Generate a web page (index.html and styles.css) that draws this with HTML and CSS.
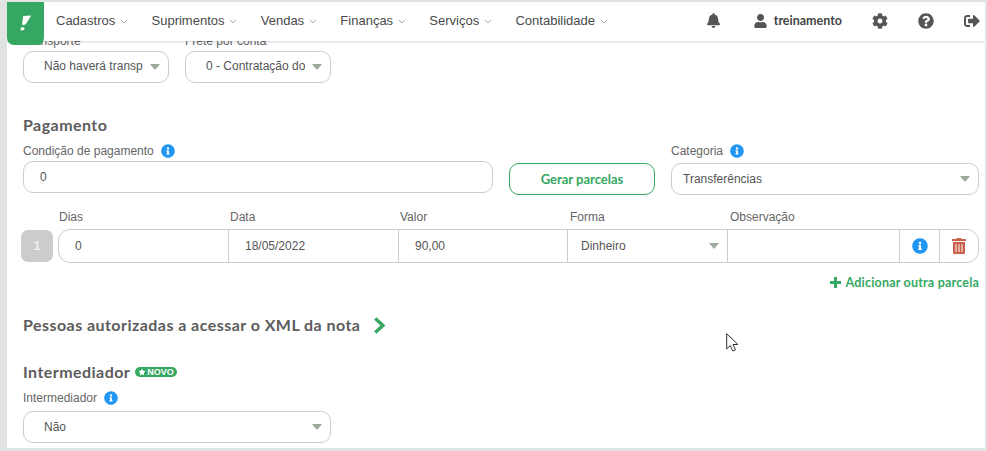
FILE: index.html
```html
<!DOCTYPE html>
<html lang="pt-BR">
<head>
<meta charset="utf-8">
<title>Nota fiscal</title>
<link rel="stylesheet" href="styles.css">
</head>
<body>
<svg class="defs" width="0" height="0" aria-hidden="true">
  <symbol id="i-info" viewBox="0 0 512 512"><path d="M256 8C119.043 8 8 119.083 8 256c0 136.997 111.043 248 248 248s248-111.003 248-248C504 119.083 392.957 8 256 8zm0 110c23.196 0 42 18.804 42 42s-18.804 42-42 42-42-18.804-42-42 18.804-42 42-42zm56 254c0 6.627-5.373 12-12 12h-88c-6.627 0-12-5.373-12-12v-24c0-6.627 5.373-12 12-12h12v-64h-12c-6.627 0-12-5.373-12-12v-24c0-6.627 5.373-12 12-12h64c6.627 0 12 5.373 12 12v100h12c6.627 0 12 5.373 12 12v24z"/></symbol>
  <symbol id="i-bell" viewBox="0 0 448 512"><path d="M224 512c35.32 0 63.97-28.65 63.97-64H160.03c0 35.35 28.65 64 63.97 64zm215.39-149.71c-19.32-20.76-55.47-51.99-55.47-154.29 0-77.7-54.48-139.9-127.94-155.16V32c0-17.67-14.32-32-31.98-32s-31.98 14.33-31.98 32v20.84C118.56 68.1 64.08 130.3 64.08 208c0 102.3-36.15 133.53-55.47 154.29-6 6.45-8.66 14.16-8.61 21.71.11 16.4 12.98 32 32.1 32h383.8c19.12 0 32-15.6 32.1-32 .05-7.55-2.61-15.27-8.61-21.71z"/></symbol>
  <symbol id="i-user" viewBox="0 0 448 512"><path d="M224 256c70.7 0 128-57.3 128-128S294.7 0 224 0 96 57.3 96 128s57.3 128 128 128zm89.6 32h-16.7c-22.2 10.2-46.9 16-72.9 16s-50.6-5.8-72.9-16h-16.7C60.2 288 0 348.2 0 422.4V464c0 26.5 21.5 48 48 48h352c26.5 0 48-21.5 48-48v-41.6c0-74.2-60.2-134.4-134.4-134.4z"/></symbol>
  <symbol id="i-cog" viewBox="0 0 512 512"><path d="M487.4 315.7l-42.6-24.6c4.3-23.2 4.3-47 0-70.2l42.6-24.6c4.9-2.8 7.1-8.6 5.5-14-11.1-35.6-30-67.8-54.7-94.6-3.8-4.1-10-5.1-14.8-2.3L380.8 110c-17.9-15.4-38.5-27.3-60.8-35.1V25.8c0-5.6-3.9-10.5-9.4-11.7-36.7-8.2-74.3-7.8-109.2 0-5.5 1.2-9.4 6.1-9.4 11.7V75c-22.2 7.9-42.8 19.8-60.8 35.1L88.7 85.5c-4.9-2.8-11-1.9-14.8 2.3-24.7 26.7-43.6 58.9-54.7 94.6-1.7 5.4.6 11.2 5.5 14L67.3 221c-4.3 23.2-4.3 47 0 70.2l-42.6 24.6c-4.9 2.8-7.1 8.6-5.5 14 11.1 35.6 30 67.8 54.7 94.6 3.8 4.1 10 5.1 14.8 2.3l42.6-24.6c17.9 15.4 38.5 27.3 60.8 35.1v49.2c0 5.6 3.9 10.5 9.4 11.7 36.7 8.2 74.3 7.8 109.2 0 5.5-1.2 9.4-6.1 9.4-11.7v-49.2c22.2-7.9 42.8-19.8 60.8-35.1l42.6 24.6c4.9 2.8 11 1.9 14.8-2.3 24.7-26.7 43.6-58.9 54.7-94.6 1.5-5.5-.7-11.3-5.6-14.1zM256 336c-44.1 0-80-35.9-80-80s35.9-80 80-80 80 35.9 80 80-35.9 80-80 80z"/></symbol>
  <symbol id="i-help" viewBox="0 0 512 512"><path d="M504 256c0 136.997-111.043 248-248 248S8 392.997 8 256C8 119.083 119.043 8 256 8s248 111.083 248 248zM262.655 90c-54.497 0-89.255 22.957-116.549 63.758-3.536 5.286-2.353 12.415 2.715 16.258l34.699 26.31c5.205 3.947 12.621 3.008 16.665-2.122 17.864-22.658 30.113-35.797 57.303-35.797 20.429 0 45.698 13.148 45.698 32.958 0 14.976-12.363 22.667-32.534 33.976C247.128 238.528 216 254.941 216 296v4c0 6.627 5.373 12 12 12h56c6.627 0 12-5.373 12-12v-1.333c0-28.462 83.186-29.647 83.186-106.667 0-58.002-60.165-102-116.531-102zM256 338c-25.365 0-46 20.635-46 46 0 25.364 20.635 46 46 46s46-20.636 46-46c0-25.365-20.635-46-46-46z"/></symbol>
  <symbol id="i-out" viewBox="0 0 512 512"><path d="M497 273L329 441c-15 15-41 4.5-41-17v-96H152c-13.3 0-24-10.7-24-24v-96c0-13.3 10.7-24 24-24h136V88c0-21.4 25.9-32 41-17l168 168c9.3 9.4 9.3 24.6 0 34zM192 436v-40c0-6.6-5.4-12-12-12H96c-17.7 0-32-14.3-32-32V160c0-17.7 14.3-32 32-32h84c6.6 0 12-5.4 12-12V76c0-6.6-5.4-12-12-12H96c-53 0-96 43-96 96v192c0 53 43 96 96 96h84c6.6 0 12-5.4 12-12z"/></symbol>
  <symbol id="i-trash" viewBox="0 0 448 512"><path d="M32 464a48 48 0 0 0 48 48h288a48 48 0 0 0 48-48V128H32zm272-256a16 16 0 0 1 32 0v224a16 16 0 0 1-32 0zm-96 0a16 16 0 0 1 32 0v224a16 16 0 0 1-32 0zm-96 0a16 16 0 0 1 32 0v224a16 16 0 0 1-32 0zM432 32H312l-9.4-18.7A24 24 0 0 0 281.1 0H166.8a23.72 23.72 0 0 0-21.4 13.3L136 32H16A16 16 0 0 0 0 48v32a16 16 0 0 0 16 16h416a16 16 0 0 0 16-16V48a16 16 0 0 0-16-16z"/></symbol>
  <symbol id="i-caret" viewBox="0 0 8 5"><path d="M.8.8 4 4l3.2-3.2" fill="none" stroke="currentColor" stroke-width=".8"/></symbol>
</svg>

<div class="frame">
  <header class="topbar">
    <a class="logo" href="#" aria-label="Início">
      <svg viewBox="0 0 16 20" width="16" height="20"><path d="M5.2 4 13.2 3.4 7.6 12.6 4 13zM2.8 15.6l3.6-.4-.2 2.9-3.6.4z" fill="#fff"/></svg>
    </a>
    <nav class="menu">
      <a class="menu-item">Cadastros<svg class="caret"><use href="#i-caret"/></svg></a>
      <a class="menu-item">Suprimentos<svg class="caret"><use href="#i-caret"/></svg></a>
      <a class="menu-item">Vendas<svg class="caret"><use href="#i-caret"/></svg></a>
      <a class="menu-item">Finanças<svg class="caret"><use href="#i-caret"/></svg></a>
      <a class="menu-item">Serviços<svg class="caret"><use href="#i-caret"/></svg></a>
      <a class="menu-item">Contabilidade<svg class="caret"><use href="#i-caret"/></svg></a>
    </nav>
    <div class="tools">
      <svg class="tool bell"><use href="#i-bell"/></svg>
      <div class="account"><svg class="tool user"><use href="#i-user"/></svg><span class="account-name">treinamento</span></div>
      <svg class="tool cog"><use href="#i-cog"/></svg>
      <svg class="tool help"><use href="#i-help"/></svg>
      <svg class="tool out"><use href="#i-out"/></svg>
    </div>
  </header>

  <main class="content">
    <div class="transport">
      <div class="field">
        <label class="label">Transporte</label>
        <div class="select"><span class="select-text clipped">Não haverá transporte</span><i class="arrow"></i></div>
      </div>
      <div class="field">
        <label class="label">Frete por conta</label>
        <div class="select"><span class="select-text clipped">0 - Contratação do frete</span><i class="arrow"></i></div>
      </div>
    </div>

    <h2 class="heading pay-heading">Pagamento</h2>
    <div class="pay-grid">
      <div class="field cond">
        <label class="label">Condição de pagamento <svg class="info"><use href="#i-info"/></svg></label>
        <div class="input">0</div>
      </div>
      <button class="btn" type="button">Gerar parcelas</button>
      <div class="field">
        <label class="label label-cat">Categoria <svg class="info"><use href="#i-info"/></svg></label>
        <div class="select select-cat"><span class="select-text">Transferências</span><i class="arrow"></i></div>
      </div>
    </div>

    <div class="parcel-head">
      <span class="label">Dias</span><span class="label">Data</span><span class="label">Valor</span><span class="label">Forma</span><span class="label">Observação</span>
    </div>
    <div class="parcel">
      <div class="parcel-num">1</div>
      <div class="parcel-cells">
        <div class="cell">0</div>
        <div class="cell">18/05/2022</div>
        <div class="cell">90,00</div>
        <div class="cell cell-forma">Dinheiro<i class="arrow"></i></div>
        <div class="cell"></div>
        <div class="cell cell-icon"><svg class="info-lg"><use href="#i-info"/></svg></div>
        <div class="cell cell-icon"><svg class="trash"><use href="#i-trash"/></svg></div>
      </div>
    </div>
    <div class="add-row"><a class="add-link" href="#"><span class="plus"></span>Adicionar outra parcela</a></div>

    <h2 class="heading xml-heading">Pessoas autorizadas a acessar o XML da nota
      <svg class="chevron" viewBox="0 0 12 16"><path d="M2 1.5 9.2 8 2 14.5" fill="none" stroke="#35a862" stroke-width="3.2"/></svg>
    </h2>

    <h2 class="heading inter-heading">Intermediador <span class="badge"><svg viewBox="0 0 10 10" width="8" height="8"><path d="m5 .6 1.4 2.9 3.1.4-2.3 2.2.6 3.2L5 7.8 2.2 9.3l.6-3.2L.5 3.9l3.1-.4z" fill="#fff"/></svg>NOVO</span></h2>
    <div class="field inter">
      <label class="label label-inter">Intermediador <svg class="info"><use href="#i-info"/></svg></label>
      <div class="select select-inter"><span class="select-text">Não</span><i class="arrow"></i></div>
    </div>
  </main>

  <svg class="cursor" viewBox="0 0 13 19" width="13" height="19"><path d="M.7.7v15.2l3.6-3.3 2.5 5.4 2.7-1.2-2.5-5.3h4.9z" fill="#fff" stroke="#333" stroke-width="1"/></svg>
</div>
</body>
</html>
```
FILE: styles.css
```css
* { box-sizing: border-box; }
html, body { margin: 0; height: 100%; }
body {
  background: #e2e4e3;
  font-family: "Liberation Sans", Arial, sans-serif;
  font-size: 12px;
  color: #555;
  overflow: hidden;
}
.defs { position: absolute; }
.frame {
  position: relative;
  margin: 2px 2px 0 7px;
  height: 446px;
  background: #fff;
  overflow: hidden;
}

/* top bar */
.topbar {
  position: absolute;
  top: 0; left: 0; right: 0;
  height: 39px;
  background: #fff;
  box-shadow: 0 1px 3px rgba(0,0,0,.16);
  display: flex;
  align-items: center;
  z-index: 2;
}
.logo {
  position: absolute;
  left: 0; top: 0;
  width: 37px; height: 43px;
  background: #36a762;
  border-radius: 0 0 7px 7px;
  display: flex;
  align-items: center;
  justify-content: center;
  padding-bottom: 4px;
}
.menu { display: flex; margin-left: 49px; gap: 23.25px; padding-bottom: 2px; }
.menu-item {
  font-size: 13px;
  color: #4a4a4a;
  display: flex;
  align-items: center;
  white-space: nowrap;
}
.caret { width: 8px; height: 5px; margin: 2px 0 0 5px; color: #8a9a90; }
.tools { margin-left: auto; display: flex; align-items: center; padding-right: 5px; padding-bottom: 2px; }
.tool { fill: #555; display: block; }
.bell { width: 13px; height: 15px; margin-right: 34px; }
.account { display: flex; align-items: center; gap: 7px; margin-right: 30px; }
.user { width: 13px; height: 14px; }
.account-name {
  font-family: Lato, sans-serif;
  font-weight: 700;
  font-size: 12.5px;
  color: #444;
}
.cog { width: 16px; height: 16px; margin-right: 30px; }
.help { width: 16px; height: 16px; margin-right: 30px; }
.out { width: 16px; height: 16px; }

/* content */
.content { padding: 30px 6px 0 16px; }
.label {
  display: flex;
  align-items: center;
  height: 16px;
  padding-top: 2px;
  margin-bottom: 3px;
  font-size: 12px;
  color: #666;
  white-space: nowrap;
}
.info { width: 14px; height: 14px; fill: #2196f3; margin-left: 7px; }
.transport { display: flex; gap: 16px; }
.transport .field { width: 146px; }
.select {
  height: 32px;
  border: 1px solid #ccc;
  border-radius: 10px;
  background: #fff;
  display: flex;
  align-items: center;
  padding: 0 8px 0 20px;
  color: #555;
}
.select-text { flex: 1; min-width: 0; white-space: nowrap; overflow: hidden; padding-bottom: 2px; }
.clipped { margin-right: 7px; }
.arrow {
  display: block;
  flex: none;
  width: 0; height: 0;
  border-left: 5px solid transparent;
  border-right: 5px solid transparent;
  border-top: 6px solid #9cab9c;
}
.heading {
  margin: 0;
  font-family: Lato, sans-serif;
  font-size: 16px;
  letter-spacing: .45px;
  line-height: 18px;
  font-weight: 700;
  color: #5c5c5c;
}
.pay-heading { margin-top: 33px; margin-bottom: 8px; }
.pay-grid {
  display: grid;
  grid-template-columns: 470px 146px 308px;
  column-gap: 16px;
  align-items: end;
}
.cond { margin-bottom: 2px; }
.input {
  height: 32px;
  border: 1px solid #ccc;
  border-radius: 10px;
  display: flex;
  align-items: center;
  padding: 0 0 1px 16px;
  color: #555;
}
.btn {
  height: 32px;
  border: 1px solid #35a862;
  border-radius: 10px;
  background: #fff;
  color: #35a862;
  font-family: Lato, sans-serif;
  font-weight: 700;
  font-size: 13px;
  padding: 0;
}
.label-cat { margin-bottom: 5px; }
.select-cat { padding-left: 11px; }
.select-cat .select-text, .select-inter .select-text { padding-bottom: 0; }

/* parcelas */
.parcel-head {
  display: grid;
  grid-template-columns: 171px 170px 170px 160px 1fr;
  margin: 13px 0 5px 36px;
}
.parcel-head .label { margin: 0; }
.parcel { display: flex; align-items: center; gap: 5px; margin-left: -2px; }
.parcel-num {
  width: 32px; height: 32px;
  flex: none;
  background: #ccc;
  border-radius: 7px;
  color: #f2f2f2;
  font-weight: 700;
  display: flex;
  align-items: center;
  justify-content: center;
}
.parcel-cells {
  flex: 1;
  height: 34px;
  border: 1px solid #ccc;
  border-radius: 12px;
  display: grid;
  grid-template-columns: 169px 170px 169px 160px 172px 40px 1fr;
}
.cell {
  display: flex;
  align-items: center;
  padding: 0 0 1px 16px;
  border-left: 1px solid #ccc;
  color: #555;
}
.cell:first-child { border-left: 0; }
.cell-forma { justify-content: space-between; padding: 0 8px 0 13px; }
.cell-icon { padding: 0; justify-content: center; }
.info-lg { width: 16px; height: 16px; fill: #2196f3; }
.trash { width: 14px; height: 16px; fill: #c9614a; }
.add-row { display: flex; justify-content: flex-end; margin-top: 11px; margin-bottom: 1px; }
.add-link {
  display: flex;
  align-items: center;
  height: 16px;
  font-family: Lato, sans-serif;
  font-size: 12.5px;
  letter-spacing: .2px;
  font-weight: 700;
  color: #35a862;
  text-decoration: none;
}
.plus {
  width: 11px; height: 11px;
  margin-right: 5px;
  background:
    linear-gradient(#35a862, #35a862) center / 11px 3px no-repeat,
    linear-gradient(#35a862, #35a862) center / 3px 11px no-repeat;
}
.xml-heading { margin-top: 26px; display: flex; align-items: center; gap: 13px; }
.chevron { width: 13px; height: 17px; }
.inter-heading { margin-top: 29px; display: flex; align-items: center; gap: 5px; }
.badge {
  display: inline-flex;
  align-items: center;
  gap: 1px;
  height: 10px;
  padding: 0 3px;
  background: #35a862;
  border-radius: 5px;
  color: #fff;
  font-family: "Liberation Sans", sans-serif;
  font-size: 9px;
  letter-spacing: 0;
  font-weight: 700;
}
.inter { width: 308px; margin-top: 8px; }
.label-inter { margin-bottom: 6px; }
.cursor { position: absolute; left: 719px; top: 331px; z-index: 1; }
```
